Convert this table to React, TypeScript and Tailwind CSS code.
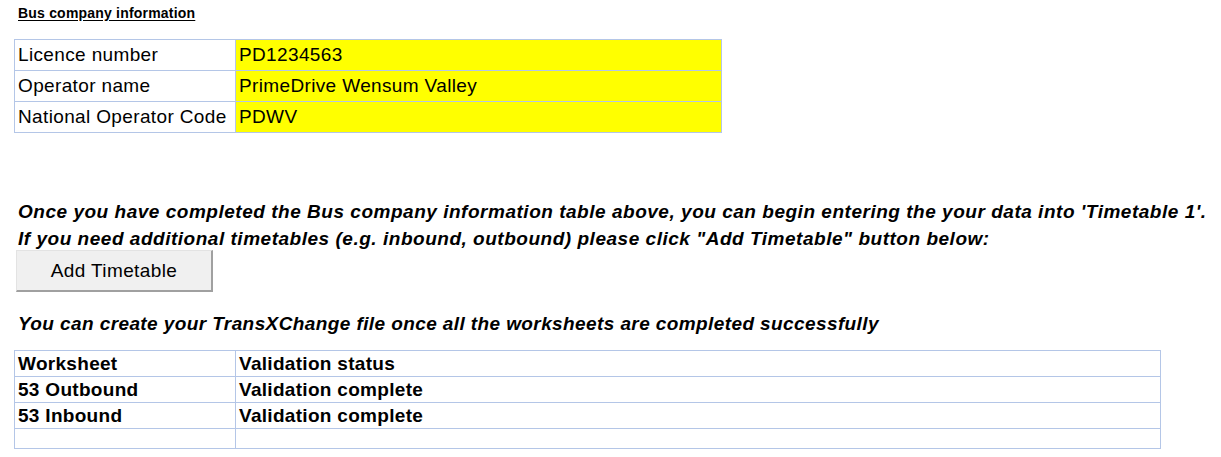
const info = [
  ["Licence number", "PD1234563"],
  ["Operator name", "PrimeDrive Wensum Valley"],
  ["National Operator Code", "PDWV"],
];

const status = [
  ["Worksheet", "Validation status"],
  ["53 Outbound", "Validation complete"],
  ["53 Inbound", "Validation complete"],
  ["", ""],
];

export default function App() {
  return (
    <div className="w-[1221px] h-[457px] bg-white text-black font-['Liberation_Sans',Arial,sans-serif] pl-[14px] pt-[5px]">
      <div className="pl-[4px] text-[14px] font-bold underline leading-[16px] underline-offset-2 tracking-[0.2px]">
        Bus company information
      </div>

      <table className="mt-[18px] border-collapse text-[19px] leading-[30px] tracking-[0.36px]">
        <tbody>
          {info.map(([k, v]) => (
            <tr key={k}>
              <td className="w-[221px] h-[31px] border border-[#b4c6e7] px-[3px] py-0 align-middle">{k}</td>
              <td className="w-[486px] h-[31px] border border-[#b4c6e7] bg-[#ffff00] px-[3px] py-0 align-middle">{v}</td>
            </tr>
          ))}
        </tbody>
      </table>

      <div className="mt-[65px] pl-[4px] text-[19px] font-bold italic leading-[27px] tracking-[0.52px] whitespace-nowrap">
        <p>Once you have completed the Bus company information table above, you can begin entering the your data into 'Timetable 1'.</p>
        <p>If you need additional timetables (e.g. inbound, outbound) please click "Add Timetable" button below:</p>
      </div>

      <button className="mt-[-2px] ml-[2px] w-[197px] h-[42px] bg-[#f0f0f0] border border-t-[#e3e3e3] border-l-[#e3e3e3] border-r-[#a0a0a0] border-b-[#a0a0a0] border-b-2 border-r-2 text-[19px] leading-[38px] text-center tracking-[0.4px]">
        Add Timetable
      </button>

      <p className="mt-[18px] pl-[4px] text-[19px] font-bold italic leading-[27px] tracking-[0.4px] whitespace-nowrap">
        You can create your TransXChange file once all the worksheets are completed successfully
      </p>

      <table className="mt-[13px] border-collapse text-[19px] font-bold leading-[24px] tracking-[0.3px]">
        <tbody>
          {status.map(([a, b], i) => (
            <tr key={i}>
              <td className={`w-[221px] border border-[#b4c6e7] px-[3px] py-0 ${i === 3 ? "h-[20px]" : "h-[26px]"}`}>{a}</td>
              <td className={`w-[925px] border border-[#b4c6e7] px-[3px] py-0 ${i === 3 ? "h-[20px]" : "h-[26px]"}`}>{b}</td>
            </tr>
          ))}
        </tbody>
      </table>
    </div>
  );
}
